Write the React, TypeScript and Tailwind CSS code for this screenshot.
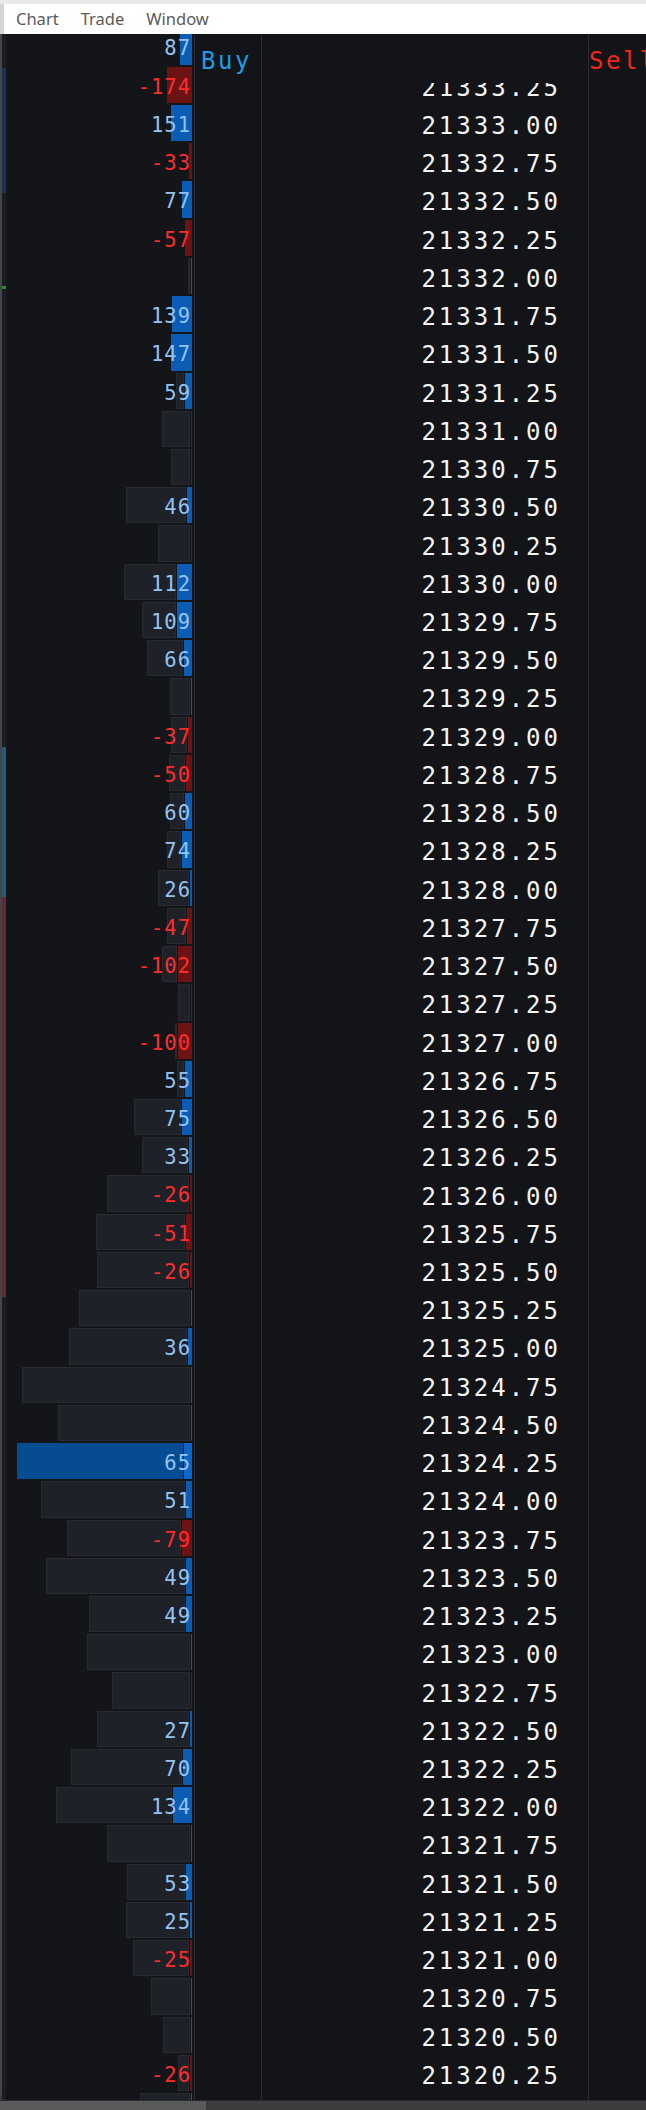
import React from "react";

// delta, left edge of the volume bar (px), highlighted
type Row = [number, number | null, boolean?];

const rows: Row[] = [
  [87, null], [-174, null], [151, null], [-33, null], [77, null], [-57, null],
  [0.1, 183], [139, null], [147, null], [59, 170], [-0.1, 156], [-0.1, 165],
  [46, 120], [-0.1, 152], [112, 118], [109, 136], [66, 141], [0.1, 164],
  [-37, 165], [-50, 163], [60, 164], [74, 161], [26, 152], [-47, 161],
  [-102, 156], [-0.1, 172], [-100, 170], [55, 171], [75, 128], [33, 136],
  [-26, 101], [-51, 90], [-26, 91], [0.1, 73], [36, 63], [0.1, 16],
  [0.1, 52], [65, 11, true], [51, 35], [-79, 61], [49, 40], [49, 83],
  [0.1, 81], [-0.1, 106], [27, 91], [70, 65], [134, 50], [0.1, 101],
  [53, 121], [25, 120], [-25, 127], [0.1, 145], [0.1, 157], [-26, 172],
  [0.1, 134],
];

const RIGHT = 192;
const mono = "font-['DejaVu_Sans_Mono',monospace]";

function deltaWidth(d: number) {
  return Math.max(1, (Math.abs(d) - 11.6) * 0.154);
}

function VolumeRow({ row }: { row: Row }) {
  const [d, left, hl] = row;
  const dw = deltaWidth(d);
  const gw = left === null ? 0 : Math.max(0, RIGHT - dw - 1 - left - 6);
  const neg = d < 0;
  const showText = Math.abs(d) >= 1;

  return (
    <div className="grid h-[38.24px] shrink-0">
      <div className="col-start-1 row-start-1 flex justify-end gap-px py-px pr-[2px]">
        {gw > 0 && (
          <div
            className={
              hl
                ? "bg-[#054c93]"
                : "bg-[#1e2128] border border-[#272a31]"
            }
            style={{ width: gw }}
          />
        )}
        <div
          className={
            neg ? "bg-[#6d1313]" : hl ? "bg-[#0a66c8]" : "bg-[#0b5cb5]"
          }
          style={{ width: dw }}
        />
      </div>
      {showText && (
        <div
          className={`col-start-1 row-start-1 pr-[3px] pt-[4px] text-right text-[20.5px] leading-[34px] tracking-[1px] ${mono} ${
            neg ? "text-[#ff2c2c]" : "text-[#93c3f2]"
          }`}
        >
          {d}
        </div>
      )}
    </div>
  );
}

function LeftEdge() {
  return (
    <div className="flex w-[6px] shrink-0 flex-col border-l-2 border-[#464646] bg-[#1a1d23]">
      <div className="h-[34px]" />
      <div className="h-[125px] bg-[#1a3150]" />
      <div className="h-[93px]" />
      <div className="h-[3px] bg-[#2e8a2e]" />
      <div className="h-[458px]" />
      <div className="h-[150px] bg-[#285a78]" />
      <div className="h-[400px] bg-[#5e2c36]" />
      <div className="flex-1" />
    </div>
  );
}

export default function App() {
  return (
    <div className="flex h-[2110px] w-[646px] flex-col overflow-hidden bg-[#3a3a3a]">
      {/* menu */}
      <div className="h-[4px] shrink-0 bg-[#e9e9e9]" />
      <div className="flex h-[30px] shrink-0 items-center gap-[22px] border-l-4 border-[#d4d4d4] bg-white pl-[12px] font-['Noto_Sans',sans-serif] text-[16.5px] leading-[30px] text-[#5a5a5a]">
        <span>Chart</span>
        <span>Trade</span>
        <span>Window</span>
      </div>

      <div className="flex min-h-0 flex-1 overflow-hidden rounded-bl-[6px] bg-[#131418]">
        <LeftEdge />

        {/* delta / volume column */}
        <div className="w-[188px] shrink-0 overflow-hidden bg-[#141519]">
          <div className="-mt-[6.6px] flex flex-col">
            {rows.map((r, i) => (
              <VolumeRow key={i} row={r} />
            ))}
          </div>
        </div>
        <div className="w-px shrink-0 bg-[#2a2d33]" />

        {/* buy */}
        <div className="w-[66px] shrink-0">
          <div className={`h-[49px] pl-[6px] pt-[2px] text-[24px] leading-[50px] tracking-[2.5px] text-[#1a9fe6] ${mono}`}>
            Buy
          </div>
        </div>
        <div className="w-px shrink-0 bg-[#2a2d33]" />

        {/* prices */}
        <div className="flex w-[326px] shrink-0 flex-col">
          <div className="h-[49px] shrink-0" />
          <div className="min-h-0 flex-1 overflow-hidden">
            <div className="-mt-[17.3px] flex flex-col">
              {rows.slice(1, 54).map((_, i) => (
                <div
                  key={i}
                  className={`h-[38.24px] shrink-0 pr-[27px] pt-[7px] text-right text-[24px] leading-[31px] tracking-[3px] text-[#f4f4f4] ${mono}`}
                >
                  {(21333.25 - i * 0.25).toFixed(2)}
                </div>
              ))}
            </div>
          </div>
        </div>
        <div className="w-px shrink-0 bg-[#2a2d33]" />

        {/* sell */}
        <div className="min-w-0 flex-1">
          <div className={`h-[49px] whitespace-nowrap pt-[2px] text-[24px] leading-[50px] tracking-[2.5px] text-[#f0281c] ${mono}`}>
            Sell
          </div>
        </div>
      </div>

      {/* bottom frame */}
      <div className="flex h-[10px] shrink-0 border-t border-[#2a2a2a]">
        <div className="w-[206px] bg-[#5a5a5a]" />
        <div className="flex-1 bg-[#3c3c3c]" />
      </div>
    </div>
  );
}
